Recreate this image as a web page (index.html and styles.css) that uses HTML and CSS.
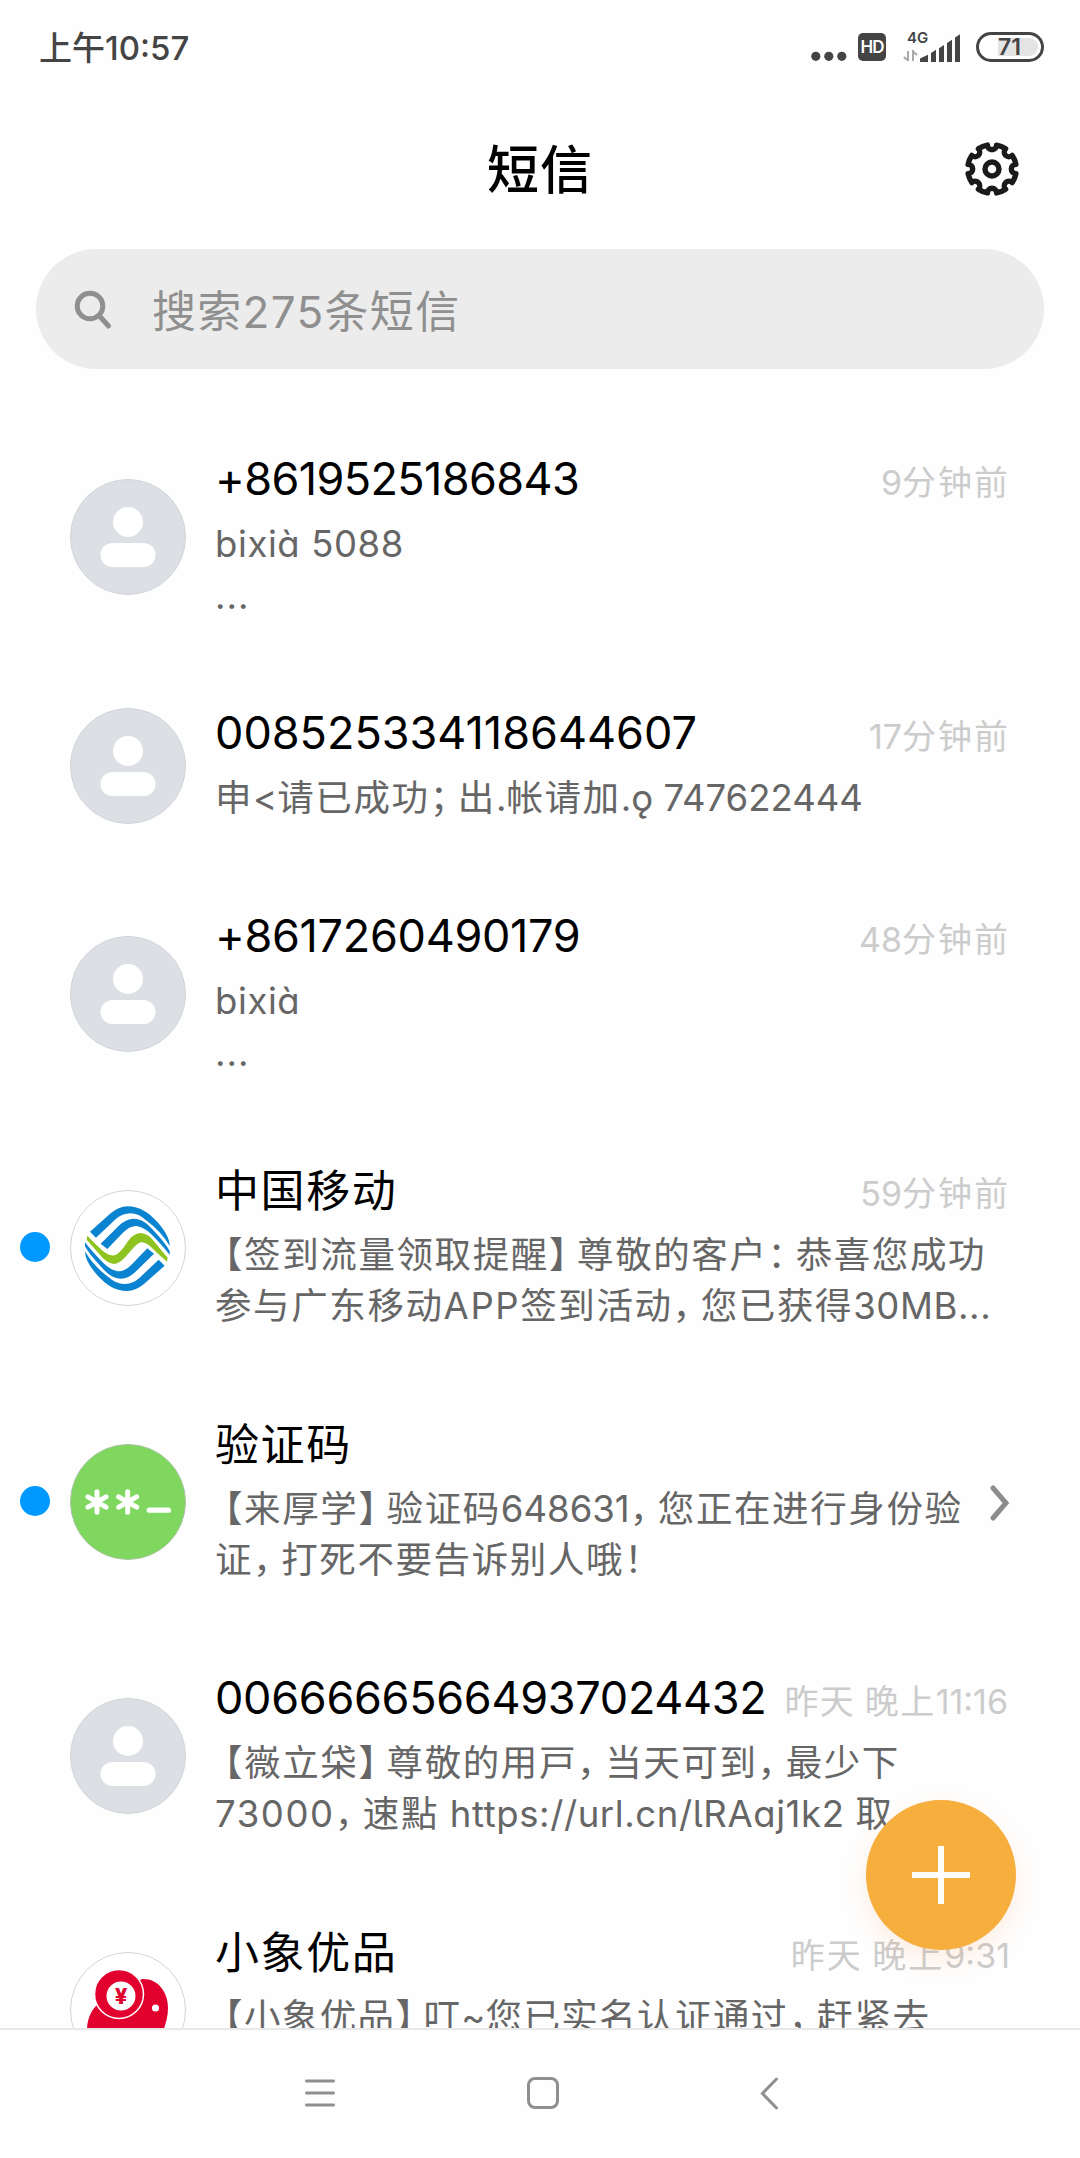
FILE: index.html
```html
<!DOCTYPE html>
<html lang="zh-CN">
<head>
  <meta charset="UTF-8">
  <meta name="viewport" content="width=device-width, initial-scale=1.0">
  <title>短信</title>
  <link rel="stylesheet" href="styles.css">
</head>
<body>
  <svg class="defs" aria-hidden="true">
    <symbol id="person" viewBox="0 0 116 116">
      <circle cx="58" cy="43" r="15"/>
      <rect x="30.5" y="64" width="55" height="24" rx="12"/>
    </symbol>
  </svg>

  <div class="status">
    <span class="clock">上午10:57</span>
    <div class="status-icons">
      <svg class="dots" viewBox="0 0 36 28"><circle cx="4.8" cy="23.3" r="4.6"/><circle cx="17.8" cy="23.3" r="4.6"/><circle cx="30.8" cy="23.3" r="4.6"/></svg>
      <span class="hd">HD</span>
      <svg class="signal" viewBox="0 0 58 32">
        <text x="4" y="12">4G</text>
        <path class="data" d="M5 30V20M5 29.500L.8 26M10 30V19M10 20.500L14 24"/>
        <path d="M17 31v-3.500l8-3.800V31zM28 31V22l5-3.300V31zM36 31V17.200l5-3.300V31zM44 31V12l5-3.300V31zM52 31V6.500L57 3.300V31z"/>
      </svg>
      <span class="battery"><b>71</b></span>
    </div>
  </div>

  <header>
    <h1>短信</h1>
    <svg class="gear" viewBox="-28 -28 56 56">
      <path d="M23.900 4.600A24.300 24.300 0 0 1 20.200 13.600A4.600 4.600 0 0 0 13.600 20.200A24.300 24.300 0 0 1 4.600 23.900A4.600 4.600 0 0 0 -4.600 23.900A24.300 24.300 0 0 1 -13.600 20.200A4.600 4.600 0 0 0 -20.200 13.600A24.300 24.300 0 0 1 -23.900 4.600A4.600 4.600 0 0 0 -23.900 -4.600A24.300 24.300 0 0 1 -20.200 -13.600A4.600 4.600 0 0 0 -13.600 -20.200A24.300 24.300 0 0 1 -4.600 -23.900A4.600 4.600 0 0 0 4.600 -23.900A24.300 24.300 0 0 1 13.600 -20.200A4.600 4.600 0 0 0 20.200 -13.600A24.300 24.300 0 0 1 23.900 -4.600A4.600 4.600 0 0 0 23.900 4.600Z"/>
      <circle r="7"/>
    </svg>
  </header>

  <div class="search">
    <svg viewBox="0 0 40 42"><circle cx="17" cy="18" r="12.800"/><path d="M26 27.500L35.500 38"/></svg>
    <span>搜索275条短信</span>
  </div>

  <main>
    <div class="item">
      <div class="avatar"><svg><use href="#person"/></svg></div>
      <div class="body">
        <div class="top"><h2 class="num tight">+8619525186843</h2><time><span>9</span>分钟前</time></div>
        <p><span class="latin">bixià 5088</span><br><span class="more">...</span></p>
      </div>
    </div>

    <div class="item">
      <div class="avatar"><svg><use href="#person"/></svg></div>
      <div class="body">
        <div class="top"><h2 class="num wide">008525334118644607</h2><time><span>17</span>分钟前</time></div>
        <p>申<span>&lt;</span>请已成功<i>；</i>出<span>.</span>帐请加<span>.ǫ 747622444</span></p>
      </div>
    </div>

    <div class="item">
      <div class="avatar"><svg><use href="#person"/></svg></div>
      <div class="body">
        <div class="top"><h2 class="num">+8617260490179</h2><time><span>48</span>分钟前</time></div>
        <p><span class="latin">bixià</span><br><span class="more">...</span></p>
      </div>
    </div>

    <div class="item unread">
      <div class="avatar white">
        <svg viewBox="210 120 348 348">
          <g id="waves" fill="#0a83d0">
            <path d="M270 245L332 190Q358 169 382 169C420 169 447 190 467 211Q509 255 509 288Q483 243 440 212Q415 190 392 190Q367 190 345 209L288 263Z"/>
            <path d="M302 281L358 226Q379 206 401 206C425 206 444 222 462 243Q497 280 509 303V315Q487 286 454 253Q431 230 408 228Q390 228 371 246L322 297Z"/>
          </g>
          <use href="#waves" transform="rotate(180 382 296)"/>
          <path fill="#8fc320" d="M262 257Q285 281 306 301Q326 319 343 316Q353 315 372 291Q397 249 420 249Q441 249 458 269L503 323L501 335Q478 315 455 293Q439 278 426 277Q415 275 391 304Q361 342 343 342Q328 342 309 325L260 269Z"/>
        </svg>
      </div>
      <div class="body">
        <div class="top"><h2>中国移动</h2><time><span>59</span>分钟前</time></div>
        <p><b>【</b>签到流量领取提醒<i>】</i>尊敬的客户<i>：</i>恭喜您成功<br>参与广东移动APP签到活动<i>，</i>您已获得<span class="latin">30MB...</span></p>
      </div>
    </div>

    <div class="item unread">
      <div class="avatar green">
        <svg viewBox="210 882 348 348">
          <g id="star"><path d="M291 1025v62M264 1040.500l54 31M318 1040.500l-54 31"/></g>
          <use href="#star" x="92"/>
          <path d="M448 1080.500h57" stroke-width="16"/>
        </svg>
      </div>
      <div class="body">
        <div class="top"><h2>验证码</h2></div>
        <p><b>【</b>来厚学<i>】</i>验证码<span>648631</span><i>，</i>您正在进行身份验<br>证<i>，</i>打死不要告诉别人哦<i>！</i></p>
      </div>
      <svg class="chevron" viewBox="0 0 22 38"><path d="M4 4L17 19L4 34"/></svg>
    </div>

    <div class="item">
      <div class="avatar"><svg><use href="#person"/></svg></div>
      <div class="body">
        <div class="top"><h2 class="num">00666665664937024432</h2><time class="late">昨天<span> </span>晚上<span>11:16</span></time></div>
        <p><b>【</b>嶶立柋<i>】</i>尊敬的用戸<i>，</i>当天可到<i>，</i>最少下<br>73000<i>，</i>速點<span class="latin"> https://url.cn/<em>l</em>RAaj1k2 </span>取</p>
      </div>
    </div>

    <div class="item">
      <div class="avatar white">
        <svg viewBox="0 0 116 116">
          <path fill="#e2002f" d="M72 27C87 26 98 39 98 56C98 66 95 73 93 80V116H17V78C17 68 21 58 28 52Z"/>
          <circle cx="49" cy="42" r="24.500" fill="#e2002f" stroke="#fff" stroke-width="1.500"/>
          <circle cx="51" cy="44" r="14.500" fill="#fff"/>
          <circle cx="85.500" cy="56" r="3.600" fill="#fff"/>
          <text class="yen" x="51" y="52">¥</text>
        </svg>
      </div>
      <div class="body">
        <div class="top"><h2>小象优品</h2><time>昨天<span> </span>晚上<span>9:31</span></time></div>
        <p><b>【</b>小象优品<i>】</i>叮<span>~</span>您已实名认证通过<i>，</i>赶紧去</p>
      </div>
    </div>
  </main>

  <button class="fab" aria-label="新建短信"></button>

  <nav>
    <svg viewBox="0 0 40 40"><path d="M6.500 8h27M6.500 20h27M6.500 32h27"/></svg>
    <svg viewBox="0 0 40 40"><rect x="4.500" y="5.500" width="29" height="29" rx="6.500"/></svg>
    <svg viewBox="0 0 40 40"><path d="M28.500 6L14.500 20.500L28.500 35"/></svg>
  </nav>
</body>
</html>
```
FILE: styles.css
```css
* {
  box-sizing: border-box;
}

body {
  margin: 0;
  height: 2158px;
  overflow: hidden;
  display: flex;
  flex-direction: column;
  background: #fefefe;
  font-family: Inter, "Noto Sans CJK SC", sans-serif;
  font-feature-settings: "cv11";
  color: #000;
}

.defs {
  display: none;
}

h1, h2, p {
  margin: 0;
  font-weight: 400;
}

/* barra de status */
.status {
  height: 93px;
  padding: 0 36px 0 39px;
  display: flex;
  justify-content: space-between;
  align-items: center;
  color: #444;
}

.clock {
  margin-top: -2px;
  font-size: 33px;
  font-weight: 500;
}

.status-icons {
  display: flex;
  align-items: center;
}

.status-icons svg {
  fill: #444;
}

.dots {
  width: 36px;
  height: 28px;
  margin-right: 11px;
}

.hd {
  width: 28px;
  height: 28px;
  margin-right: 17px;
  border-radius: 5px;
  background: #444;
  color: #fff;
  font-size: 17px;
  font-weight: 600;
  line-height: 29px;
  text-align: center;
  letter-spacing: -1px;
}

.signal {
  width: 58px;
  height: 32px;
  margin-right: 15px;
}

.signal text {
  font-size: 15px;
  font-weight: 600;
}

.signal .data {
  fill: none;
  stroke: #aaa;
  stroke-width: 2;
}

.battery {
  width: 68px;
  height: 30px;
  padding: 3px;
  border: 3px solid #444;
  border-radius: 15px;
}

.battery b {
  display: block;
  height: 18px;
  padding-right: 1px;
  border-radius: 9px;
  background: linear-gradient(90deg, transparent 16px, #e4e4e4 16px);
  font-size: 23px;
  font-weight: 600;
  line-height: 18px;
  text-align: center;
}

header {
  height: 156px;
  display: grid;
  grid-template-columns: 1fr auto 1fr;
  align-items: center;
  padding: 0 60px;
}

h1 {
  grid-column: 2;
  font-size: 52px;
  font-weight: 500;
  line-height: 148px;
  letter-spacing: 1px;
}

.gear {
  width: 56px;
  height: 56px;
  justify-self: end;
  margin-bottom: 5px;
  fill: none;
  stroke: #1a1a1a;
  stroke-width: 5.4;
  stroke-linejoin: round;
}

.search {
  height: 120px;
  margin: 0 36px;
  padding-left: 37px;
  display: flex;
  align-items: center;
  border-radius: 60px;
  background: #ececec;
  color: #8f8f8f;
  font-size: 44px;
  letter-spacing: 1.3px;
}

.search svg {
  width: 40px;
  height: 42px;
  margin-right: 39px;
  fill: none;
  stroke: #8f8f8f;
  stroke-width: 5;
  stroke-linecap: round;
}

/* lista de conversas */
main {
  height: 1659px;
  padding-top: 41px;
  overflow: hidden;
}

.item {
  position: relative;
  display: flex;
  align-items: center;
  padding: 41px 72px 43px 70px;
}

.avatar {
  width: 116px;
  height: 116px;
  flex: none;
  margin: -20px 29px -22px 0;
  border: 1px solid #d2d5d9;
  border-radius: 50%;
  background: #dcdfe4;
  overflow: hidden;
}

.avatar svg {
  display: block;
  width: 116px;
  height: 116px;
  margin: -1px;
  fill: #fff;
}

.avatar.white {
  background: #fff;
}

.avatar.green {
  background: #7fd75f;
  border-color: #a9c4a2;
}

.green svg {
  stroke: #fff;
  stroke-width: 15;
  stroke-linecap: round;
}

.yen {
  fill: #e2002f;
  font-size: 22px;
  font-weight: 800;
  text-anchor: middle;
}

.unread::before {
  content: "";
  position: absolute;
  left: 20px;
  top: 111px;
  width: 30px;
  height: 30px;
  border-radius: 50%;
  background: #0099ff;
}

.body {
  flex: 1;
  min-width: 0;
}

.top {
  height: 68px;
  display: flex;
  justify-content: space-between;
  white-space: nowrap;
}

h2 {
  font-size: 44px;
  line-height: 58px;
  letter-spacing: 1.6px;
}

.num {
  font-size: 45px;
  line-height: 56px;
  letter-spacing: -0.3px;
}

.tight {
  letter-spacing: -0.6px;
}

.wide {
  letter-spacing: 0;
}

time {
  font-size: 34px;
  line-height: 64px;
  letter-spacing: 2px;
  margin-right: -2px;
  color: #ccc;
}

.late {
  letter-spacing: 1.4px;
  margin-right: 0;
}

p {
  font-size: 36.5px;
  line-height: 51px;
  letter-spacing: 1.6px;
  color: #666;
  white-space: nowrap;
}

.item:last-child p {
  min-height: 102px;
  letter-spacing: 1.4px;
}

/* números e letras latinas sem espaço extra */
p span,
time span {
  letter-spacing: 0;
}

p .latin {
  letter-spacing: 0.6px;
}

.latin em {
  font-style: normal;
  font-feature-settings: "cv05";
}

/* pontuação mais estreita */
p i {
  font-style: normal;
  margin-right: -10px;
}

p b {
  font-weight: 400;
  margin-left: -9px;
}

p .more {
  position: relative;
  top: 1px;
  letter-spacing: 1px;
}

.chevron {
  position: absolute;
  left: 989px;
  top: 109px;
  width: 22px;
  height: 38px;
  fill: none;
  stroke: #8c8c8c;
  stroke-width: 5;
  stroke-linecap: round;
}

.fab {
  position: absolute;
  left: 866px;
  top: 1800px;
  width: 150px;
  height: 150px;
  border: none;
  border-radius: 50%;
  background:
    linear-gradient(#fff, #fff) center / 58px 6px no-repeat,
    linear-gradient(#fff, #fff) center / 6px 58px no-repeat,
    #f6ae3c;
  box-shadow: 0 10px 24px rgba(246, 140, 60, 0.15);
}

nav {
  height: 130px;
  border-top: 2px solid #e8e8e8;
  background: #fefefe;
  display: flex;
  align-items: center;
  padding: 0 0 2px 300px;
  gap: 184px;
}

nav svg {
  width: 40px;
  height: 40px;
  fill: none;
  stroke: #8f8f8f;
  stroke-width: 3;
  stroke-linecap: round;
}
```
